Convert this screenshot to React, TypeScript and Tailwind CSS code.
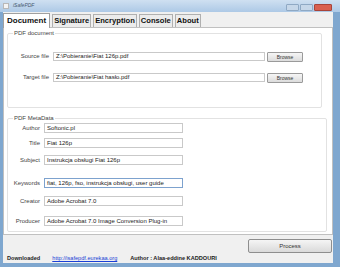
import React from "react";

const font = { fontFamily: '"Liberation Sans", Arial, sans-serif' };

function Field({ label, value, w = "w-[139px]", focus = false }: { label: string; value: string; w?: string; focus?: boolean }) {
  return (
    <div className="flex items-center h-[10px]">
      <span className="w-[36px] pr-[4px] text-right text-[6px] text-[#444]">{label}</span>
      <div
        className={`${w} h-[10px] border ${focus ? "border-[#7da2ce]" : "border-[#c9c9c9]"} bg-white pl-[2px] text-[6px] leading-[8px] text-[#222] whitespace-nowrap overflow-hidden`}
      >
        {value}
      </div>
    </div>
  );
}

function FileRow({ label, value }: { label: string; value: string }) {
  return (
    <div className="flex items-center h-[11px]">
      <span className="w-[45px] pr-[4px] text-right text-[6px] text-[#444]">{label}</span>
      <div className="w-[212px] h-[9px] border border-[#c9c9c9] bg-white pl-[2px] text-[6px] leading-[7px] text-[#222] whitespace-nowrap">
        {value}
      </div>
      <div className="ml-[2px] w-[36px] h-[10px] border border-[#9a9a9a] rounded-[1px] bg-gradient-to-b from-[#f6f6f6] to-[#dcdcdc] text-[5px] leading-[8px] text-center text-[#333]">
        Browse
      </div>
    </div>
  );
}

export default function App() {
  const tabs = ["Document", "Signature", "Encryption", "Console", "About"];
  return (
    <div style={font} className="w-[340px] h-[267px] bg-[#7fa7cf] flex flex-col overflow-hidden">
      {/* title bar */}
      <div className="h-[12px] flex items-center bg-gradient-to-b from-[#cfe0f1] to-[#adc9e6] pl-[3px] pr-[8px]">
        <div className="w-[6px] h-[6px] border border-[#b8b8b8] bg-[#f4f4f4]" />
        <span className="ml-[4px] text-[5px] italic text-[#4a5a70]">iSafePDF</span>
        <div className="ml-auto flex gap-[1px] mt-[2px]">
          <div className="w-[13px] h-[7px] rounded-[1px] border border-[#8fa9c4] bg-[#c6d7e9]" />
          <div className="w-[13px] h-[7px] rounded-[1px] border border-[#8fa9c4] bg-[#c6d7e9]" />
          <div className="w-[18px] h-[7px] rounded-[1px] border border-[#a8443a] bg-[#d9604f]" />
        </div>
      </div>

      <div className="flex-1 ml-[3px] mr-[7px] bg-[#f0f0f0] flex flex-col">
        {/* tabs */}
        <div className="flex items-end h-[15px] gap-[2px]">
          {tabs.map((t, i) => (
            <div
              key={t}
              className={
                i === 0
                  ? "h-[15px] px-[3px] bg-white border border-b-0 border-[#a0a0a0] text-[8px] font-bold leading-[14px] text-[#111] -mb-[1px] relative z-10"
                  : "h-[13px] px-[1px] bg-[#ececec] border border-b-0 border-[#b0b0b0] text-[7.6px] font-bold leading-[12px] text-[#111]"
              }
            >
              {t}
            </div>
          ))}
        </div>

        {/* panel */}
        <div className="h-[208px] bg-white border border-[#c0c0c0] flex flex-col px-[3px] pt-[2px]">
          <div className="relative mt-[3px] h-[75px] mr-[7px] border border-[#e2e2e2] rounded-[2px] flex flex-col pt-[17px] gap-[10px]">
            <span className="absolute -top-[4px] left-[5px] bg-white px-[1px] text-[6px] leading-[7px] text-[#444]">PDF document</span>
            <FileRow label="Source file" value="Z:\Pobieranie\Fiat 126p.pdf" />
            <FileRow label="Target file" value="Z:\Pobieranie\Fiat hasło.pdf" />
          </div>

          <div className="relative mt-[10px] h-[114px] mr-[2px] border border-[#e2e2e2] rounded-[2px] flex flex-col pt-[4px]">
            <span className="absolute -top-[4px] left-[5px] bg-white px-[1px] text-[6px] leading-[7px] text-[#444]">PDF MetaData</span>
            <Field label="Author" value="Softonic.pl" />
            <div className="mt-[5px]"><Field label="Title" value="Fiat 126p" /></div>
            <div className="mt-[7px]"><Field label="Subject" value="Instrukcja obsługi Fiat 126p" /></div>
            <div className="mt-[13px]"><Field label="Keywords" value="fiat, 126p, fso, instrukcja obsługi, user guide" focus /></div>
            <div className="mt-[8px]"><Field label="Creator" value="Adobe Acrobat 7.0" /></div>
            <div className="mt-[10px]"><Field label="Producer" value="Adobe Acrobat 7.0 Image Conversion Plug-in" /></div>
          </div>
        </div>

        {/* footer */}
        <div className="flex justify-end mt-[4px] pr-[1px]">
          <div className="w-[84px] h-[14px] border border-[#8e8e8e] rounded-[2px] bg-gradient-to-b from-[#f5f5f5] to-[#dadada] text-[6px] leading-[12px] text-center text-[#333]">
            Process
          </div>
        </div>
        <div className="flex items-center mt-[1px] pl-[4px] text-[5.6px] leading-[8px]">
          <span className="font-bold text-[#222]">Downloaded</span>
          <span className="ml-[12px] text-[#1a3fd6] underline">http://isafepdf.eurekaa.org</span>
          <span className="ml-[13px] font-bold text-[#222]">Author : Alaa-eddine KADDOURI</span>
        </div>
      </div>
      <div className="h-[4px]" />
    </div>
  );
}
